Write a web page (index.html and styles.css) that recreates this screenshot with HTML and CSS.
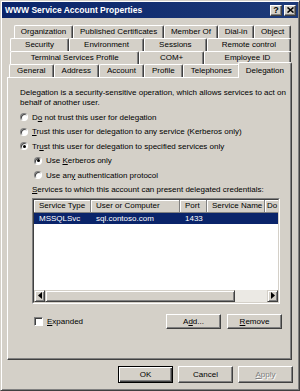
FILE: index.html
```html
<!DOCTYPE html>
<html lang="en">
<head>
    <meta charset="UTF-8">
    <meta name="viewport" content="width=device-width, initial-scale=1.0">
    <title>WWW Service Account Properties</title>
    <link rel="stylesheet" href="styles.css">
</head>
<body>
    <div class="window">
        <div class="titlebar">
            <span class="title">WWW Service Account Properties</span>
            <span class="cbtn">?</span>
            <span class="cbtn">
                <svg width="7" height="6" viewBox="0 0 7 6"><path d="M0.5 0.5 L6.5 5.5 M6.5 0.5 L0.5 5.5" stroke="#000" stroke-width="1.6"/></svg>
            </span>
        </div>

        <div class="tabs">
            <div class="tab-row row-1">
                <span class="tab">Organization</span>
                <span class="tab">Published Certificates</span>
                <span class="tab">Member Of</span>
                <span class="tab">Dial-in</span>
                <span class="tab">Object</span>
            </div>
            <div class="tab-row row-2">
                <span class="tab">Security</span>
                <span class="tab">Environment</span>
                <span class="tab">Sessions</span>
                <span class="tab">Remote control</span>
            </div>
            <div class="tab-row row-3">
                <span class="tab">Terminal Services Profile</span>
                <span class="tab">COM+</span>
                <span class="tab">Employee ID</span>
            </div>
            <div class="tab-row row-4">
                <span class="tab">General</span>
                <span class="tab">Address</span>
                <span class="tab">Account</span>
                <span class="tab">Profile</span>
                <span class="tab">Telephones</span>
                <span class="tab selected">Delegation</span>
            </div>
        </div>

        <div class="panel">
            <p class="intro">Delegation is a security-sensitive operation, which allows services to act on behalf of another user.</p>

            <div class="options">
                <div class="radio-row"><span class="radio"></span><span>D<u>o</u> not trust this user for delegation</span></div>
                <div class="radio-row"><span class="radio"></span><span><u>T</u>rust this user for delegation to any service (Kerberos only)</span></div>
                <div class="radio-row"><span class="radio checked"></span><span>Tr<u>u</u>st this user for delegation to specified services only</span></div>
                <div class="radio-row sub"><span class="radio checked"></span><span>Use <u>K</u>erberos only</span></div>
                <div class="radio-row sub"><span class="radio"></span><span>Use an<u>y</u> authentication protocol</span></div>
            </div>

            <div class="list-label"><u>S</u>ervices to which this account can present delegated credentials:</div>

            <div class="listview">
                <div class="lv-inner">
                    <div class="lv-header">
                        <span class="col c-type">Service Type</span>
                        <span class="col c-user">User or Computer</span>
                        <span class="col c-port">Port</span>
                        <span class="col c-name">Service Name</span>
                        <span class="col c-domain">Do</span>
                    </div>
                    <div class="lv-body">
                        <div class="lv-row selected">
                            <span class="col c-type">MSSQLSvc</span>
                            <span class="col c-user">sql.contoso.com</span>
                            <span class="col c-port">1433</span>
                            <span class="col c-name"></span>
                            <span class="col c-domain"></span>
                        </div>
                    </div>
                    <div class="hscroll">
                        <span class="sb-btn">
                            <svg width="4" height="7" viewBox="0 0 4 7"><path d="M4 0 L0 3.5 L4 7 Z" fill="#000"/></svg>
                        </span>
                        <span class="sb-thumb"></span>
                        <span class="sb-track"></span>
                        <span class="sb-btn">
                            <svg width="4" height="7" viewBox="0 0 4 7"><path d="M0 0 L4 3.5 L0 7 Z" fill="#000"/></svg>
                        </span>
                    </div>
                </div>
            </div>

            <div class="list-actions">
                <div class="check-row"><span class="checkbox"></span><span><u>E</u>xpanded</span></div>
                <div class="btns">
                    <button class="btn">A<u>d</u>d...</button>
                    <button class="btn"><u>R</u>emove</button>
                </div>
            </div>
        </div>

        <div class="footer">
            <button class="btn btn-large btn-default">OK</button>
            <button class="btn btn-large">Cancel</button>
            <button class="btn btn-large" disabled><u>A</u>pply</button>
        </div>
    </div>
</body>
</html>
```

FILE: styles.css
```css
body {
    margin: 0;
    font-family: "Liberation Sans", Arial, sans-serif;
    font-size: 8px;
    color: #000;
    background-color: #d4d0c8;
}

.window {
    width: 300px;
    height: 391px;
    box-sizing: border-box;
    display: flex;
    flex-direction: column;
    padding: 1px;
    background-color: #d4d0c8;
    border: 1px solid;
    border-color: #d4d0c8 #404040 #404040 #d4d0c8;
    box-shadow: inset 1px 1px #fff, inset -1px -1px #808080;
}

/* title bar */
.titlebar {
    height: 16px;
    display: flex;
    align-items: center;
    gap: 2px;
    padding: 0 2px 0 3px;
    background: linear-gradient(to right, #0a246a, #1d3a78);
}

.title {
    flex: 1;
    color: #fff;
    font-weight: bold;
    font-size: 8.5px;
}

.cbtn {
    width: 12px;
    height: 11px;
    box-sizing: border-box;
    display: flex;
    align-items: center;
    justify-content: center;
    font-weight: bold;
    font-size: 9px;
    background-color: #d4d0c8;
    border: 1px solid;
    border-color: #fff #404040 #404040 #fff;
    box-shadow: inset -1px -1px #808080;
}

/* tabs */
.tabs {
    margin-top: 7px;
}

.tab-row {
    display: flex;
    height: 13px;
}

.row-1 { margin: 0 7px 0 12px; }
.row-2,
.row-3 { margin: 0 7px 0 8px; }
.row-4 { margin: 0 8px 0 7px; }

.tab {
    flex: 1 1 auto;
    box-sizing: border-box;
    padding: 0 3px;
    line-height: 11px;
    text-align: center;
    white-space: nowrap;
    background-color: #d4d0c8;
    border-top: 1px solid #fff;
    border-left: 1px solid #fff;
    border-right: 1px solid #404040;
    border-radius: 2px 2px 0 0;
    box-shadow: inset -1px 0 #808080;
}

.tab.selected {
    position: relative;
    z-index: 1;
    align-self: flex-start;
    height: 16px;
    margin: -2px -2px -1px -2px;
    padding-top: 2px;
}

/* page panel */
.panel {
    height: 283px;
    box-sizing: border-box;
    margin-left: 5px;
    width: 285px;
    padding: 10px 9px 0 12px;
    border: 1px solid;
    border-color: #fff #404040 #404040 #fff;
    box-shadow: inset -1px -1px #808080;
}

.intro {
    margin: 0 -8px 0 0;
    line-height: 10px;
}

.options {
    margin-top: 2px;
}

.radio-row {
    height: 14.5px;
    display: flex;
    align-items: center;
    gap: 4px;
    white-space: nowrap;
}

.radio-row.sub {
    margin-left: 14px;
}

.radio {
    flex: none;
    width: 8px;
    height: 8px;
    box-sizing: border-box;
    display: flex;
    align-items: center;
    justify-content: center;
    border-radius: 50%;
    background-color: #fff;
    border: 1px solid;
    border-color: #808080 #fff #fff #808080;
    box-shadow: inset 1px 1px #404040;
}

.radio.checked::after {
    content: "";
    width: 3px;
    height: 3px;
    border-radius: 50%;
    background-color: #000;
}

.list-label {
    margin: 1px 0 0 12px;
    line-height: 12px;
}

/* list view */
.listview {
    width: 248px;
    height: 106px;
    box-sizing: border-box;
    margin: 2px 0 0 12px;
    border: 1px solid;
    border-color: #808080 #fff #fff #808080;
}

.lv-inner {
    height: 100%;
    box-sizing: border-box;
    display: flex;
    flex-direction: column;
    background-color: #fff;
    border: 1px solid;
    border-color: #404040 #d4d0c8 #d4d0c8 #404040;
    overflow: hidden;
}

.lv-header,
.lv-row {
    display: flex;
    white-space: nowrap;
}

.lv-header .col {
    height: 13px;
    line-height: 12px;
    background-color: #d4d0c8;
    border-right: 1px solid #808080;
    border-bottom: 1px solid #808080;
    box-shadow: inset 1px 1px #fff;
}

.col {
    flex: none;
    box-sizing: border-box;
    padding-left: 5px;
    overflow: hidden;
}

.c-type { width: 57px; }
.c-user { width: 89px; }
.c-port { width: 27px; }
.c-name { width: 58px; }
.c-domain {
    flex: 1;
    padding-left: 2px;
}

.lv-header .c-domain {
    border-right: none;
}

.lv-body {
    flex: 1;
}

.lv-row {
    height: 11px;
    line-height: 11px;
}

.lv-row.selected {
    color: #fff;
    background-color: #0a246a;
}

.hscroll {
    height: 12px;
    display: flex;
    background-color: #ebe9e4;
}

.sb-btn,
.sb-thumb {
    box-sizing: border-box;
    background-color: #d4d0c8;
    border: 1px solid;
    border-color: #d4d0c8 #404040 #404040 #d4d0c8;
    box-shadow: inset 1px 1px #fff, inset -1px -1px #808080;
}

.sb-btn {
    width: 11px;
    display: flex;
    align-items: center;
    justify-content: center;
}

.sb-thumb {
    width: 190px;
}

.sb-track {
    flex: 1;
}

/* under the list */
.list-actions {
    display: flex;
    align-items: center;
    margin: 10px 0 0 14px;
}

.check-row {
    flex: 1;
    display: flex;
    align-items: center;
    gap: 4px;
}

.checkbox {
    flex: none;
    width: 9px;
    height: 9px;
    box-sizing: border-box;
    background-color: #fff;
    border: 1px solid;
    border-color: #808080 #fff #fff #808080;
    box-shadow: inset 1px 1px #404040;
}

.btns {
    display: flex;
    gap: 6px;
}

.btn {
    width: 55px;
    height: 15px;
    padding: 0;
    box-sizing: border-box;
    font-family: inherit;
    font-size: 8px;
    color: #000;
    background-color: #d4d0c8;
    border: 1px solid;
    border-color: #fff #404040 #404040 #fff;
    box-shadow: inset -1px -1px #808080;
}

.btn-large {
    height: 17px;
}

.btn-default {
    border-color: #000;
    box-shadow: inset 1px 1px #fff, inset -1px -1px #404040, inset -2px -2px #808080;
}

.btn:disabled {
    color: #808080;
    text-shadow: 1px 1px #fff;
}

/* dialog buttons */
.footer {
    display: flex;
    justify-content: flex-end;
    gap: 5px;
    margin-top: 6px;
    padding-right: 5px;
}
```
